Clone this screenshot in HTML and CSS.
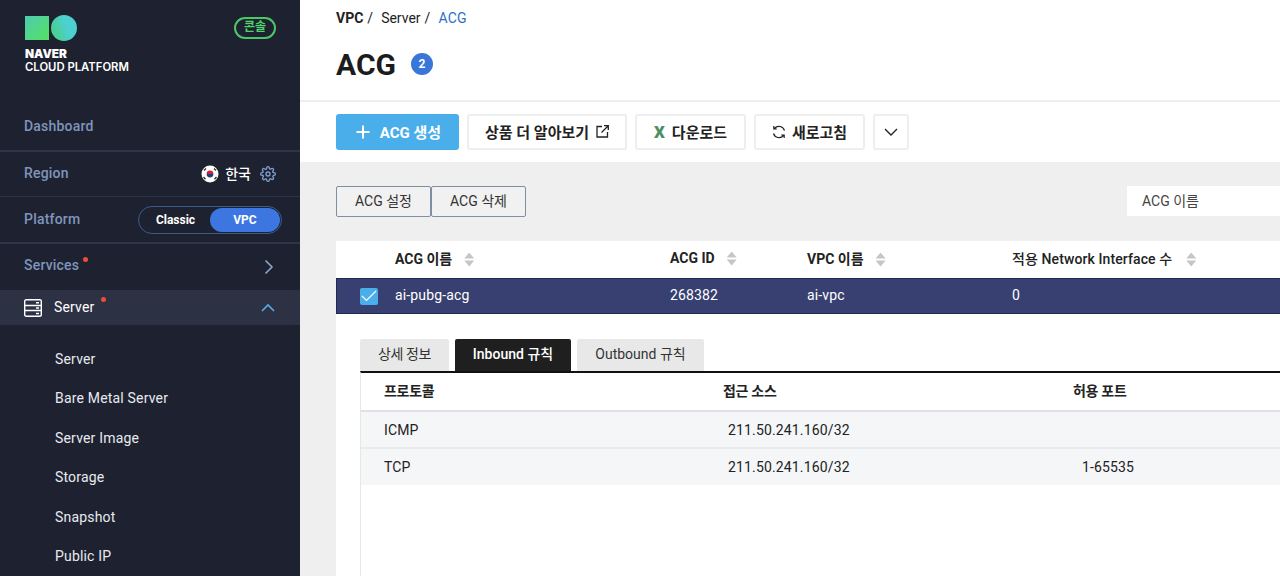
FILE: index.html
```html
<!DOCTYPE html>
<html lang="ko">
<head>
<meta charset="utf-8">
<title>ACG</title>
<link rel="stylesheet" href="styles.css">
</head>
<body>
<div class="app">
  <aside class="side">
    <div class="brand">
      <div class="brand-left">
        <div class="logo-marks"><span class="mark-sq"></span><span class="mark-ci"></span></div>
        <div class="logo-t1">NAVER</div>
        <div class="logo-t2">CLOUD PLATFORM</div>
      </div>
      <span class="console">콘솔</span>
    </div>
    <div class="srow r-dash"><span class="slabel">Dashboard</span></div>
    <div class="srow r-region">
      <span class="slabel">Region</span>
      <div class="region-val">
        <svg class="flag" width="18" height="18" viewBox="0 0 18 18"><circle cx="9" cy="9" r="8.5" fill="#fff"/><path d="M5.6 9a3.4 3.4 0 0 1 6.8 0z" fill="#d0213a"/><path d="M5.6 9a3.4 3.4 0 0 0 6.8 0z" fill="#1d3f86"/><path d="M3 5.5l2-2M2.5 12l2 2.2M15 5.5l-2-2M15.5 12l-2 2.2" stroke="#333" stroke-width="1.4"/></svg>
        <span class="region-name">한국</span>
        <svg class="gear" width="16" height="16" viewBox="0 0 24 24" fill="none" stroke="#7f9fd0" stroke-width="2"><circle cx="12" cy="12" r="3"/><path d="M19.4 15a1.65 1.65 0 0 0 .33 1.82l.06.06a2 2 0 1 1-2.83 2.83l-.06-.06a1.65 1.65 0 0 0-2.82 1.17V21a2 2 0 1 1-4 0v-.09a1.65 1.65 0 0 0-2.82-1.12l-.06.06a2 2 0 1 1-2.83-2.83l.06-.06A1.65 1.65 0 0 0 3.09 14H3a2 2 0 1 1 0-4h.09a1.65 1.65 0 0 0 1.12-2.82l-.06-.06a2 2 0 1 1 2.83-2.83l.06.06A1.65 1.65 0 0 0 10 3.09V3a2 2 0 1 1 4 0v.09a1.65 1.65 0 0 0 2.82 1.12l.06-.06a2 2 0 1 1 2.83 2.83l-.06.06A1.65 1.65 0 0 0 20.91 10H21a2 2 0 1 1 0 4h-.09a1.65 1.65 0 0 0-1.51 1z"/></svg>
      </div>
    </div>
    <div class="srow r-plat">
      <span class="slabel">Platform</span>
      <div class="switch"><span class="sw-off">Classic</span><span class="sw-on">VPC</span></div>
    </div>
    <div class="srow r-serv">
      <span class="slabel">Services<i class="dot"></i></span>
      <svg width="10" height="16" viewBox="0 0 10 16" fill="none" stroke="#8fa6c9" stroke-width="1.6"><path d="M1.5 1.5 8 8l-6.500 6.500"/></svg>
    </div>
    <div class="srow r-server">
      <div class="server-l">
        <svg width="18" height="18" viewBox="0 0 18 18" fill="none" stroke="#fff" stroke-width="1.400"><rect x=".7" y=".7" width="16.600" height="16.600" rx="1.500"/><path d="M1 6.500h16M1 11.500h16M12 3.700h3M12 9h3M12 14.500h3"/></svg>
        <span class="server-t">Server<i class="dot dot-s"></i></span>
      </div>
      <svg width="14" height="9" viewBox="0 0 14 9" fill="none" stroke="#5aa9ee" stroke-width="1.600"><path d="M1 8l6-6 6 6"/></svg>
    </div>
    <ul class="submenu">
      <li>Server</li>
      <li>Bare Metal Server</li>
      <li>Server Image</li>
      <li>Storage</li>
      <li>Snapshot</li>
      <li>Public IP</li>
    </ul>
  </aside>
  <main class="main">
    <section class="head">
      <div class="crumb"><b>VPC</b><span class="sl">/</span><span>Server</span><span class="sl">/</span><span class="cur">ACG</span></div>
      <div class="title-row"><h1>ACG</h1><span class="badge">2</span></div>
      <div class="toolbar">
        <button class="btn primary"><svg width="14" height="14" viewBox="0 0 14 14" stroke="#fff" stroke-width="2"><path d="M7 .5v13M.5 7h13"/></svg><span>ACG 생성</span></button>
        <button class="btn b-more">상품 더 알아보기<svg width="13" height="13" viewBox="0 0 13 13" fill="none" stroke="#222" stroke-width="1.300"><path d="M6 1.500H1v10.500h10.500V7M5.500 7.500 12 1M8 .7h4.300V5"/></svg></button>
        <button class="btn b-down"><span class="xl">X</span>다운로드</button>
        <button class="btn b-ref"><svg width="14" height="14" viewBox="0 0 14 14" fill="none" stroke="#222" stroke-width="1.200"><path d="M12.500 5.500A5.800 5.800 0 0 0 2.500 3.500M1.500 8.500a5.800 5.800 0 0 0 10 2M1.800 1v3h3M12.200 13v-3h-3"/></svg>새로고침</button>
        <button class="btn b-caret"><svg width="14" height="8" viewBox="0 0 14 8" fill="none" stroke="#222" stroke-width="1.400"><path d="M1 1l6 6 6-6"/></svg></button>
      </div>
    </section>
    <section class="content">
      <div class="actions">
        <div class="act-btns"><button class="act">ACG 설정</button><button class="act">ACG 삭제</button></div>
        <div class="search">ACG 이름</div>
      </div>
      <div class="panel">
        <div class="thead">
          <span class="c1"></span>
          <span class="c2">ACG 이름<i class="sort"></i></span>
          <span class="c3">ACG ID<i class="sort"></i></span>
          <span class="c4">VPC 이름<i class="sort"></i></span>
          <span class="c5">적용 Network Interface 수<i class="sort"></i></span>
        </div>
        <div class="trow-sel">
          <span class="c1"><span class="check"><svg width="16" height="12" viewBox="0 0 16 12" fill="none" stroke="#fff" stroke-width="1.200"><path d="M1 6l4.500 4.500L15 1"/></svg></span></span>
          <span class="c2">ai-pubg-acg</span>
          <span class="c3">268382</span>
          <span class="c4">ai-vpc</span>
          <span class="c5">0</span>
        </div>
        <div class="detail">
          <div class="tabs">
            <span class="tab t1">상세 정보</span>
            <span class="tab t2 active">Inbound 규칙</span>
            <span class="tab t3">Outbound 규칙</span>
          </div>
          <div class="rules">
            <div class="rhead"><span class="p1">프로토콜</span><span class="p2">접근 소스</span><span class="p3">허용 포트</span></div>
            <div class="rrow"><span class="p1">ICMP</span><span class="p2 v">211.50.241.160/32</span><span class="p3 v"></span></div>
            <div class="rrow"><span class="p1">TCP</span><span class="p2 v">211.50.241.160/32</span><span class="p3 v">1-65535</span></div>
          </div>
        </div>
      </div>
    </section>
  </main>
</div>
</body>
</html>
```

FILE: styles.css
```css
* { box-sizing: border-box; }
html, body { margin: 0; padding: 0; height: 576px; overflow: hidden; }
body { font-family: Roboto, "Noto Sans CJK KR", sans-serif; font-size: 14px; color: #222; background: #fff; }
.app { display: flex; width: 1280px; height: 576px; overflow: hidden; }

.side { width: 300px; flex: none; background: #1e2230; color: #fff; }
.brand { height: 104px; padding: 14px 24px 0 25px; display: flex; justify-content: space-between; align-items: flex-start; }
.logo-marks { display: flex; align-items: center; gap: 2px; height: 28px; }
.mark-sq { width: 24px; height: 24px; background: linear-gradient(135deg, #4ccdb0, #55e060); }
.mark-ci { width: 26px; height: 26px; border-radius: 50%; background: linear-gradient(70deg, #48d080 5%, #4dd0d0 60%); }
.logo-t1 { margin-top: 6px; font: 900 11.800px/13px Inter, sans-serif; color: #fff; }
.logo-t2 { font: 600 11.300px/13px Inter, sans-serif; color: #fff; }
.console { margin-top: 3px; width: 42px; height: 22px; border: 2px solid #4bc765; border-radius: 11px; color: #4fd56b; font-size: 12px; font-weight: 700; line-height: 17px; text-align: center; }
.srow { display: flex; justify-content: space-between; align-items: center; padding: 0 24px; border-bottom: 1px solid #2f3448; }
.r-dash { height: 48px; border-bottom-width: 2px; padding-bottom: 3px; }
.r-region { height: 45px; }
.r-plat { height: 47px; padding-right: 18px; border-bottom-width: 2px; }
.r-serv { height: 46px; padding-right: 26px; border-bottom: 0; }
.slabel { font-size: 14px; font-weight: 500; color: #7f95bd; letter-spacing: .2px; }
.r-region .slabel, .r-plat .slabel { margin-bottom: 2px; }
.r-serv .slabel { margin-bottom: 4px; }
.dot { display: inline-block; width: 5px; height: 5px; border-radius: 50%; background: #ef4a3c; vertical-align: 8px; margin-left: 4px; }
.dot-s { margin-left: 7px; vertical-align: 10px; }
.region-val { display: flex; align-items: center; }
.flag { margin-right: 6px; }
.region-name { font-size: 14px; font-weight: 500; color: #fff; margin: 0 9px 3px 0; }
.switch { width: 144px; height: 28px; border: 1px solid #3a5a90; border-radius: 14px; display: flex; align-items: center; padding: 1px; }
.sw-off { flex: 1; text-align: center; font-size: 12px; font-weight: 700; color: #fff; padding-left: 1px; }
.sw-on { width: 70px; height: 24px; border-radius: 12px; background: #3d76e0; color: #fff; font-size: 12px; font-weight: 700; text-align: center; line-height: 24px; }
.r-server { height: 35px; background: #2c3144; border-bottom: 0; padding-right: 25px; }
.server-l { display: flex; align-items: center; gap: 12px; }
.server-t { font-size: 14px; color: #fff; letter-spacing: .15px; margin-bottom: 3px; }
.submenu { list-style: none; margin: 0; padding: 14.500px 0 0 55px; }
.submenu li { height: 39.600px; line-height: 39.600px; font-size: 14px; color: #e8eaf0; letter-spacing: .18px; }

.main { flex: 1; min-width: 0; display: flex; flex-direction: column; }
.head { height: 162px; flex: none; padding: 9px 0 0 36px; }
.crumb { display: flex; font-size: 14px; line-height: 18px; color: #222; }
.crumb b { font-weight: 700; }
.sl { margin: 0 8px 0 4px; }
.cur { color: #2f6fc4; letter-spacing: .2px; }
.title-row { display: flex; align-items: center; height: 40px; margin-top: 17px; }
h1 { margin: 0; font-size: 30px; font-weight: 700; color: #1c1c1c; }
.badge { margin-left: 15px; width: 22px; height: 22px; border-radius: 50%; background: #3a76d8; color: #fff; font-size: 12px; font-weight: 700; text-align: center; line-height: 22px; }
.toolbar { margin: 16px 0 0 -36px; padding: 12px 0 0 36px; border-top: 2px solid #eee; display: flex; gap: 8px; }
.btn { height: 36px; border: 2px solid #eee; border-radius: 3px; background: #fff; display: flex; align-items: center; justify-content: center; font: 700 15px Roboto, "Noto Sans CJK KR", sans-serif; color: #222; padding: 0 0 1px; }
.primary { width: 123px; background: #4aaeea; border: 0; color: #fff; gap: 10px; padding-left: 2px; }
.b-more { width: 160px; gap: 7px; }
.b-down { width: 111px; gap: 7px; }
.b-ref { width: 111px; gap: 6px; }
.b-caret { width: 36px; }
.xl { color: #4e8f63; font-weight: 900; font-size: 17px; }

.content { flex: 1; background: #efefef; padding: 24px 0 0 36px; }
.actions { display: flex; justify-content: space-between; }
.act-btns { display: flex; }
.act { width: 95px; height: 31px; border: 1px solid #7f8ea3; border-radius: 2px; background: #f1f1f1; color: #333; font: 400 14px Roboto, "Noto Sans CJK KR", sans-serif; padding: 0 0 3px; }
.search { width: 153px; height: 30px; background: #fff; padding-left: 15px; line-height: 30px; color: #444; font-size: 14px; }
.panel { margin-top: 24px; background: #fff; height: 400px; }
.thead, .trow-sel { display: flex; align-items: center; }
.thead { height: 37px; font-weight: 700; color: #222; padding-bottom: 4px; }
.trow-sel { height: 36px; background: #374070; color: #fff; border: 1px solid #1e2a4f; border-right: 0; padding-bottom: 3px; letter-spacing: .15px; }
.c1 { width: 59px; flex: none; padding-left: 24px; display: flex; }
.trow-sel .c1 { width: 58px; padding-left: 23px; padding-top: 3px; }
.c2 { width: 275px; flex: none; }
.c3 { width: 137px; flex: none; }
.c4 { width: 205px; flex: none; }
.c5 { flex: 1; }
.thead .c5 { font-weight: 500; letter-spacing: .1px; }
.sort { display: inline-block; width: 10px; height: 14px; margin-left: 12px; vertical-align: -3px; background: #c6c6c6; clip-path: path('M5 0L10 6H0ZM0 8H10L5 14Z'); }
.thead .c5 .sort { margin-left: 14px; }
.check { width: 18px; height: 17px; border-radius: 2px; background: #4aaeea; display: flex; align-items: center; justify-content: center; }
.detail { padding: 25px 0 0 24px; }
.tabs { display: flex; gap: 6px; height: 32px; }
.tab { height: 32px; background: #e8e8e8; border-radius: 2px 2px 0 0; line-height: 31px; font-size: 14px; color: #333; text-align: center; }
.t1 { width: 89px; letter-spacing: -.4px; }
.t2 { width: 116px; }
.t3 { width: 127px; }
.tab.active { background: #1f1f1f; color: #fff; font-weight: 500; }
.rules { border-top: 2px solid #111; border-left: 1px solid #e6e6e6; height: 300px; }
.rhead, .rrow { display: flex; align-items: center; }
.rhead { height: 39px; font-weight: 700; border-bottom: 2px solid #e0e1e4; color: #222; padding-bottom: 4px; letter-spacing: -.3px; }
.rrow { height: 37px; background: #f5f6f8; border-bottom: 2px solid #e9eaec; color: #222; letter-spacing: .15px; }
.rrow:last-child { border-bottom: 0; height: 36px; }
.p1 { width: 343px; padding-left: 23px; flex: none; }
.p2 { width: 369px; flex: none; }
.p2.v { padding-left: 24px; }
.rhead .p2 { padding-left: 19px; }
.p3.v { padding-left: 9px; }
```
